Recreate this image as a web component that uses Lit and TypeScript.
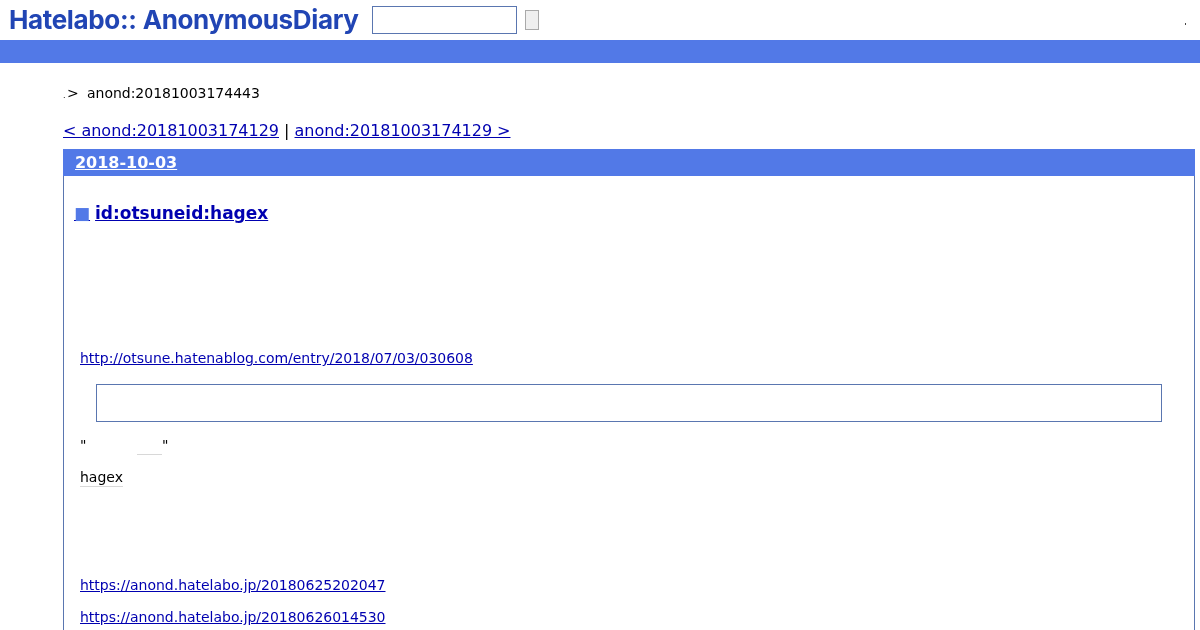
import { LitElement, html, css } from "lit";
import { customElement } from "lit/decorators.js";

@customElement("app-root")
export class AppRoot extends LitElement {
  static styles = css`
    :host {
      display: block;
      height: 630px;
      overflow: hidden;
      color: #000;
      font-family: "DejaVu Sans", sans-serif;
      font-size: 14px;
      letter-spacing: -0.02px;
      will-change: transform;
    }
    a {
      color: #0000b0;
    }
    .top {
      display: flex;
      align-items: center;
      height: 40px;
      box-sizing: border-box;
      padding-left: 9px;
    }
    .logo {
      flex: none;
      width: 349px;
      margin-right: 14px;
      font-family: "Inter", sans-serif;
      font-weight: 700;
      font-size: 26px;
      line-height: 40px;
      color: #2145b4;
      white-space: nowrap;
      letter-spacing: -0.35px;
    }
    .logo span {
      margin-left: 6px;
    }
    .search {
      width: 145px;
      height: 28px;
      box-sizing: border-box;
      border: 1px solid #5a76b0;
      background: #fff;
      margin-right: 8px;
    }
    .go {
      width: 14px;
      height: 20px;
      box-sizing: border-box;
      border: 1px solid #a9a9a9;
      background: #efefef;
    }
    .bar {
      height: 23px;
      background: #5279e7;
    }
    .wrap {
      padding: 0 5px 0 63px;
    }
    .crumb {
      display: flex;
      align-items: baseline;
      height: 20px;
      margin-top: 20px;
      line-height: 20px;
    }
    .crumb .dot {
      width: 4px;
      font-size: 8px;
    }
    .crumb .gt {
      width: 20px;
    }
    .pager {
      margin-top: 18px;
      height: 19px;
      font-size: 16px;
      line-height: 19px;
    }
    .day {
      margin-top: 9px;
      border: 1px solid #5a76b0;
      border-top: 0;
      height: 520px;
    }
    .day-head {
      height: 27px;
      margin: 0 -1px;
      padding-left: 12px;
      background: #5279e7;
      font-size: 16px;
      font-weight: 700;
      line-height: 27px;
    }
    .day-head a {
      color: #fff;
    }
    .title {
      margin: 26px 0 0 10px;
      height: 22px;
      font-size: 17px;
      font-weight: 700;
      line-height: 22px;
    }
    .mark {
      color: #5279e7;
      margin-right: 5px;
      font-weight: 400;
      text-decoration-color: #0000b0;
    }
    .body {
      padding: 0 16px;
    }
    .line {
      height: 20px;
      line-height: 20px;
    }
    .l1 {
      margin-top: 124px;
    }
    .quote {
      height: 36px;
      margin: 16px 16px 0;
      border: 1px solid #5a76b0;
    }
    .l2 {
      margin-top: 13px;
      display: flex;
    }
    .gap {
      width: 75.5px;
      height: 20px;
      display: flex;
      justify-content: flex-end;
    }
    .gap span {
      width: 25px;
      height: 19px;
      border-bottom: 1px solid #d8d8d8;
    }
    .l3 {
      margin-top: 12px;
    }
    .dotted {
      display: inline-block;
      height: 19px;
      border-bottom: 1px solid #d8d8d8;
    }
    .l4 {
      margin-top: 88px;
    }
    .l5 {
      margin-top: 12px;
    }
    .speck {
      position: absolute;
      left: 1185px;
      top: 23px;
      width: 1px;
      height: 2px;
      background: #444;
    }
  `;

  render() {
    return html`
      <div class="top">
        <div class="logo">Hatelabo::<span>AnonymousDiary</span></div>
        <div class="search"></div>
        <div class="go"></div>
      </div>
      <i class="speck"></i>
      <div class="bar"></div>
      <div class="wrap">
        <div class="crumb">
          <span class="dot">.</span><span class="gt">&gt;</span>
          <span>anond:20181003174443</span>
        </div>
        <div class="pager">
          <a href="#">&lt; anond:20181003174129</a> |
          <a href="#">anond:20181003174129 &gt;</a>
        </div>
        <div class="day">
          <div class="day-head"><a href="#">2018-10-03</a></div>
          <div class="title">
            <a class="mark" href="#">■</a><a href="#">id:otsuneid:hagex</a>
          </div>
          <div class="body">
            <div class="line l1">
              <a href="#">http://otsune.hatenablog.com/entry/2018/07/03/030608</a>
            </div>
            <div class="quote"></div>
            <div class="line l2">"<div class="gap"><span></span></div>"</div>
            <div class="line l3"><span class="dotted">hagex</span></div>
            <div class="line l4">
              <a href="#">https://anond.hatelabo.jp/20180625202047</a>
            </div>
            <div class="line l5">
              <a href="#">https://anond.hatelabo.jp/20180626014530</a>
            </div>
          </div>
        </div>
      </div>
    `;
  }
}
